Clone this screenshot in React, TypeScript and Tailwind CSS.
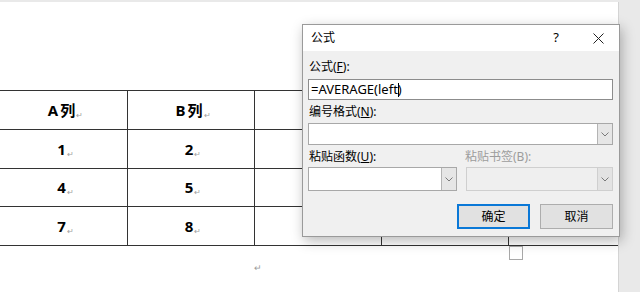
import React from "react";

const rows = [
  ["A|列", "B|列", "", ""],
  ["1", "2", "", ""],
  ["4", "5", "", ""],
  ["7", "8", "", ""],
];

const rowHeights = ["h-[39px]", "h-[39px]", "h-[38px]", "h-[39px]"];
const colWidths = ["w-[128px]", "w-[127px]", "w-[127px]", "w-[127px]"];

function Mark() {
  return <span className="ml-[1px] text-[8px] font-normal text-[#a0a0a0] leading-none relative top-[2px]">↵</span>;
}

function Chevron() {
  return (
    <svg width="8" height="5" viewBox="0 0 8 5" fill="none">
      <polyline points="0.5,0.5 4,4 7.5,0.5" stroke="#7a7a7a" strokeWidth="1" />
    </svg>
  );
}

function Select({ disabled, className }: { disabled?: boolean; className?: string }) {
  return (
    <div
      className={
        "flex border " +
        (disabled ? "bg-[#efefef] border-[#cfcfcf] " : "bg-white border-[#a8a8a8] ") +
        (className || "")
      }
    >
      <div className="flex-1" />
      <div
        className={
          "w-[15px] flex items-center justify-center border-l " +
          (disabled ? "bg-[#e3e3e3] border-[#cfcfcf]" : "bg-[#e6e6e6] border-[#b4b4b4]")
        }
      >
        <Chevron />
      </div>
    </div>
  );
}

function CellText({ text }: { text: string }) {
  const [a, b] = text.split("|");
  return (
    <span className="leading-none">
      {a}
      {b && <span className="ml-[2px]">{b}</span>}
      <Mark />
    </span>
  );
}

export default function App() {
  return (
    <div
      className="relative w-[640px] h-[292px] overflow-hidden bg-[#e9e9e9] flex"
      style={{ fontFamily: '"Noto Sans", "Noto Sans CJK SC", sans-serif' }}
    >
      <div className="w-[619px] mt-[2px] bg-white border-r border-[#d4d4d4] pt-[88px]">
        <div className="border-t border-[#333]">
          {rows.map((r, i) => (
            <div key={i} className={"flex border-b border-[#333] " + rowHeights[i]}>
              {r.map((c, j) => (
                <div
                  key={j}
                  className={
                    "flex items-center justify-center border-r border-[#333] text-[15px] font-bold text-black pl-[4px] " +
                    colWidths[j]
                  }
                >
                  {c && <CellText text={c} />}
                </div>
              ))}
            </div>
          ))}
        </div>
        <div className="ml-[509px] w-[14px] h-[14px] border border-[#a8a8a8]" />
        <div className="ml-[254px] mt-[3px] text-[9px] leading-none text-[#9a9a9a]">↵</div>
      </div>

      {/* formula dialog */}
      <div className="absolute left-[302px] top-[24px] w-[318px] h-[213px] border border-[#9a9a9a] bg-[#f0f0f0] shadow-[2px_4px_12px_rgba(0,0,0,0.28)] flex flex-col text-[12px] text-black">
        <div className="h-[26px] bg-white flex items-center pl-[8px] pr-[15px]">
          <span className="text-[12px]">公式</span>
          <span className="ml-auto text-[13px] mr-[34px]">?</span>
          <svg width="11" height="11" viewBox="0 0 11 11">
            <path d="M0.5 0.5 L10.5 10.5 M10.5 0.5 L0.5 10.5" stroke="#222" strokeWidth="1" />
          </svg>
        </div>
        <div className="flex flex-col pl-[5px] pr-[6px] pt-[8px]">
          <div className="h-[16px] leading-[16px] pl-[1px]">
            公式(<span className="underline">F</span>):
          </div>
          <div className="mt-[4px] h-[21px] border border-[#8c8c8c] bg-white flex items-center pl-[2px] text-[13px]">
            <span className="leading-none">=AVERAGE(left</span>
            <span className="inline-block w-px h-[14px] bg-black -mr-px" />
            <span className="leading-none">)</span>
          </div>
          <div className="mt-[4px] h-[16px] leading-[16px] pl-[1px]">
            编号格式(<span className="underline">N</span>):
          </div>
          <Select className="mt-[3px] h-[22px]" />
          <div className="mt-[4px] h-[16px] leading-[16px] flex">
            <div className="flex-1 pl-[1px]">
              粘贴函数(<span className="underline">U</span>):
            </div>
            <div className="w-[148px] text-[#9c9c9c]">粘贴书签(B):</div>
          </div>
          <div className="mt-[2px] flex gap-[9px]">
            <Select className="flex-1 h-[24px]" />
            <Select disabled className="w-[147px] h-[24px]" />
          </div>
          <div className="mt-[13px] flex justify-end gap-[10px]">
            <button className="w-[73px] h-[25px] bg-[#e1e1e1] border-2 border-[#0a78d7] text-[12px]">确定</button>
            <button className="w-[73px] h-[25px] bg-[#e1e1e1] border border-[#adadad] text-[12px]">取消</button>
          </div>
        </div>
      </div>
    </div>
  );
}
